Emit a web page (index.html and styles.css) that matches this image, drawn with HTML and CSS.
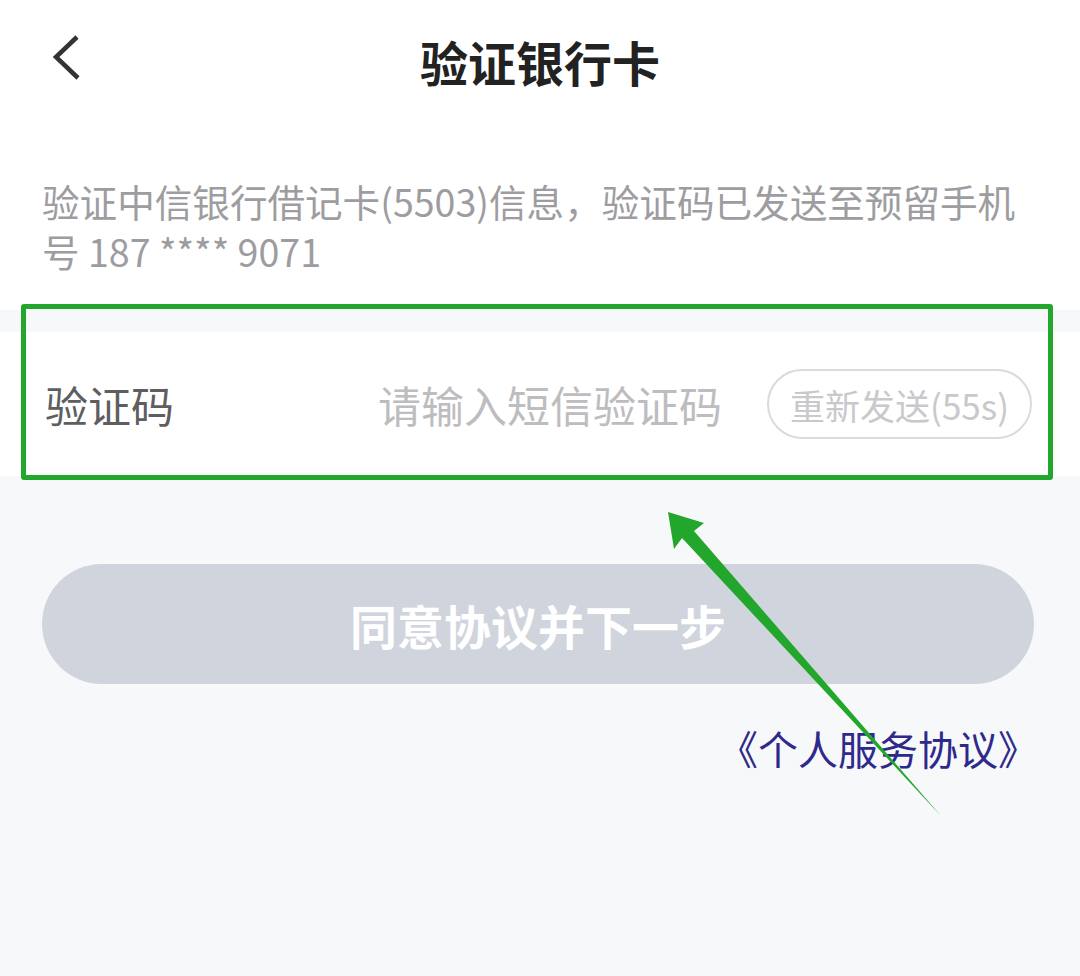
FILE: index.html
```html
<!DOCTYPE html>
<html lang="zh-CN">
<head>
  <meta charset="UTF-8">
  <meta name="viewport" content="width=device-width, initial-scale=1.0">
  <title>验证银行卡</title>
  <link rel="stylesheet" href="styles.css">
</head>
<body>
  <div class="page">
    <div class="top">
      <div class="header">
        <a class="back" href="#">
          <svg width="34" height="50" viewBox="0 0 34 50"><polyline points="27,4 6,24 28,45" fill="none" stroke="#333" stroke-width="4.5" stroke-linejoin="miter"/></svg>
        </a>
        <h1>验证银行卡</h1>
        <span></span>
      </div>
      <p class="intro">验证中信银行借记卡(5503)信息，验证码已发送至预留手机号 187 **** 9071</p>
    </div>

    <div class="code-row">
      <label for="smsCode">验证码</label>
      <input type="text" id="smsCode" placeholder="请输入短信验证码">
      <button class="resend" type="button">重新发送(55s)</button>
    </div>

    <button class="next" type="button">同意协议并下一步</button>
    <div class="terms"><a href="#">《个人服务协议》</a></div>

    <!-- annotation -->
    <div class="mark-box"></div>
    <svg class="mark-arrow" width="1080" height="976" viewBox="0 0 1080 976">
      <polygon points="668,512 704,523 694,531 941,816 682,538 674,549" fill="#22a62b"/>
    </svg>
  </div>
</body>
</html>
```
FILE: styles.css
```css
body {
  margin: 0;
  background: #f7f8fa;
  font-family: "Noto Sans CJK SC", "Noto Sans", sans-serif;
}
.page {
  position: relative;
  width: 1080px;
  min-height: 976px;
}
.top {
  background: #fff;
}
.header {
  display: grid;
  grid-template-columns: 1fr auto 1fr;
  align-items: center;
  height: 126px;
}
.back {
  display: block;
  width: 34px;
  height: 50px;
  margin: 0 0 10px 50px;
}
.back svg {
  display: block;
}
h1 {
  margin: 0 0 4px;
  font-size: 48px;
  font-weight: 700;
  color: #222;
}
.intro {
  margin: 0;
  padding: 50px 60px 34px 42px;
  font-size: 37.6px;
  line-height: 50px;
  color: #9d9da1;
}
.code-row {
  display: flex;
  align-items: center;
  height: 144px;
  margin-top: 22px;
  padding: 0 48px 0 45px;
  background: #fff;
}
.code-row label {
  width: 333px;
  font-size: 43px;
  color: #5e5e60;
}
.code-row input {
  flex: 1;
  min-width: 0;
  border: none;
  outline: none;
  background: transparent;
  padding: 0;
  font-family: inherit;
  font-size: 43px;
  color: #333;
}
.code-row input::placeholder {
  color: #bdbdbf;
}
.resend {
  height: 70px;
  padding: 0 21px;
  border: 2px solid #dadada;
  border-radius: 35px;
  background: #fff;
  font-family: inherit;
  font-size: 35px;
  color: #c9c9cb;
}
.next {
  display: block;
  width: 992px;
  height: 120px;
  margin: 88px 0 0 42px;
  border: none;
  border-radius: 60px;
  background: #d0d4dc;
  font-family: inherit;
  font-size: 47px;
  font-weight: 700;
  color: #fff;
}
.terms {
  margin-top: 36px;
  padding-right: 42px;
  text-align: right;
  font-size: 40px;
  line-height: 56px;
}
.terms a {
  color: #2d2a8a;
  text-decoration: none;
}
.mark-box {
  position: absolute;
  left: 21px;
  top: 304px;
  width: 1022px;
  height: 166px;
  border: 5px solid #22a62b;
  border-radius: 3px;
}
.mark-arrow {
  position: absolute;
  left: 0;
  top: 0;
  pointer-events: none;
}
```
